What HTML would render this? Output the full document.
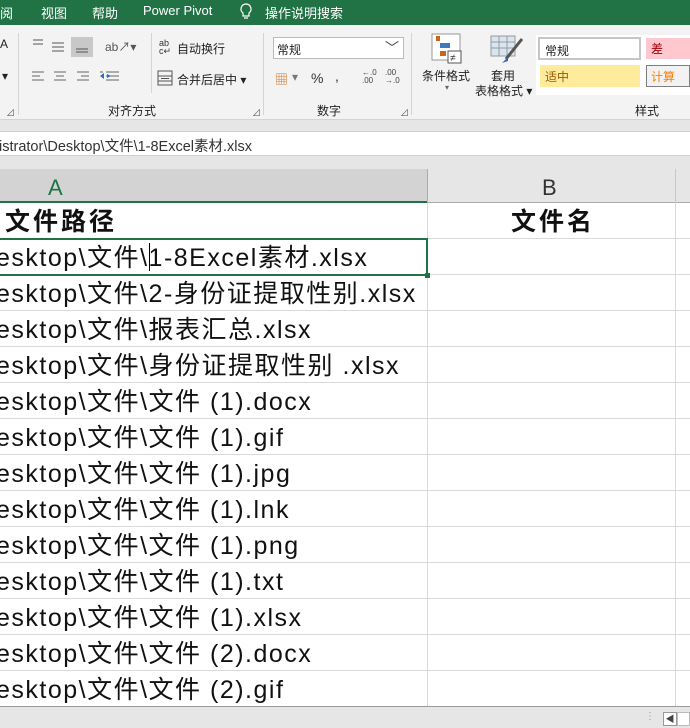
<!DOCTYPE html>
<html><head><meta charset="utf-8"><style>
*{margin:0;padding:0;box-sizing:border-box}
body{width:690px;height:728px;overflow:hidden;background:#e6e6e6;font-family:"Liberation Sans","Noto Sans CJK SC",sans-serif;position:relative}
.a{position:absolute;white-space:nowrap}
.top{left:0;top:0;width:690px;height:25px;background:#217346;color:#fff;font-size:13px}
.rib{left:0;top:25px;width:690px;height:95px;background:#f3f3f3;border-bottom:1px solid #d4d4d4}
.s{font-size:12px;color:#222}
.vl{width:1px;background:#d4d4d4}
.fb{left:0;top:131px;width:690px;height:25px;background:#fff;border-top:1px solid #d0d0d0;border-bottom:1px solid #d0d0d0;font-size:14.5px;color:#333}
.hdr{top:169px;height:34px;font-size:22px;text-align:center;line-height:38px;border-bottom:1px solid #ababab}
.grid{left:0;top:203px;width:690px;height:504px;background:#fff}
.row{position:absolute;left:0;width:690px;height:36px;border-bottom:1px solid #d9d9d9;font-size:25px;letter-spacing:1.5px;color:#111;line-height:38px}
.row span{position:absolute;left:-4px}
.ln{position:absolute;top:0;width:1px;height:504px;background:#d9d9d9}
</style></head><body>
<div class="a top">
<span class="a" style="left:0;top:3px">阅</span>
<span class="a" style="left:41px;top:3px">视图</span>
<span class="a" style="left:92px;top:3px">帮助</span>
<span class="a" style="left:143px;top:3px">Power Pivot</span>
<svg class="a" style="left:239px;top:3px" width="14" height="18" viewBox="0 0 14 18"><path d="M7 1a5 5 0 0 0-3 9v3h6v-3a5 5 0 0 0-3-9zM5 15h4" fill="none" stroke="#fff" stroke-width="1.2"/></svg>
<span class="a" style="left:265px;top:3px">操作说明搜索</span>
</div>
<div class="a rib">
<span class="a s" style="left:0;top:12px">A</span>
<span class="a s" style="left:2px;top:44px">▾</span>
<span class="a" style="left:6px;top:81px;font-size:9px;color:#666">⊿</span>
<div class="a vl" style="left:18px;top:8px;height:82px"></div>
<svg class="a" style="left:30px;top:10px" width="70" height="22"><g stroke="#555" stroke-width="1"><path d="M3 5h10M3 9h10M22 8h12M22 12h12M22 16h12"/></g><rect x="41" y="2" width="22" height="20" fill="#c8c8c8"/><path d="M46 14h12M46 17h12" stroke="#555"/></svg>
<span class="a s" style="left:105px;top:13px;color:#555">ab↗▾</span>
<svg class="a" style="left:30px;top:44px" width="95" height="16"><g stroke="#666" stroke-width="1"><path d="M2 3h12M2 7h8M2 11h12M24 3h12M26 7h8M24 11h12M47 3h12M51 7h8M47 11h12M70 3h3M76 3h10M76 7h10M76 11h10"/></g><path d="M70 7l4-3v6z" fill="#2a6ebb"/></svg>
<svg class="a" style="left:105px;top:44px" width="20" height="16"><g stroke="#666"><path d="M2 3h12M8 7h6M2 11h12"/></g><path d="M2 5l4 2-4 2z" fill="#2a6ebb"/></svg>
<div class="a vl" style="left:151px;top:8px;height:60px"></div>
<span class="a" style="left:159px;top:14px;font-size:9px;color:#333;line-height:8px">ab<br>c↵</span>
<span class="a s" style="left:177px;top:15px">自动换行</span>
<svg class="a" style="left:157px;top:45px" width="16" height="16"><rect x="1" y="1" width="14" height="14" fill="none" stroke="#555"/><path d="M1 6h14M1 11h14M4 8.5h8" stroke="#555"/></svg>
<span class="a s" style="left:177px;top:46px">合并后居中 ▾</span>
<span class="a s" style="left:108px;top:77px">对齐方式</span>
<span class="a" style="left:252px;top:81px;font-size:9px;color:#666">⊿</span>
<div class="a vl" style="left:263px;top:8px;height:82px"></div>
<div class="a" style="left:273px;top:12px;width:131px;height:22px;background:#fff;border:1px solid #bbb"><span class="a s" style="left:3px;top:3px">常规</span><span class="a" style="right:4px;top:0;font-size:14px;color:#444">﹀</span></div>
<span class="a" style="left:275px;top:44px;font-size:13px;color:#d67b2a">▦</span>
<span class="a s" style="left:292px;top:45px;color:#777">▾</span>
<span class="a" style="left:311px;top:45px;font-size:14px;color:#333">%</span>
<span class="a" style="left:335px;top:43px;font-size:14px;color:#333">,</span>
<span class="a" style="left:362px;top:44px;font-size:8px;color:#444;line-height:8px">←.0<br>.00</span>
<span class="a" style="left:385px;top:44px;font-size:8px;color:#444;line-height:8px">.00<br>→.0</span>
<span class="a s" style="left:317px;top:77px">数字</span>
<span class="a" style="left:400px;top:81px;font-size:9px;color:#666">⊿</span>
<div class="a vl" style="left:411px;top:8px;height:82px"></div>
<svg class="a" style="left:431px;top:8px" width="32" height="32"><rect x="1" y="1" width="28" height="26" fill="#fff" stroke="#999"/><rect x="5" y="3" width="4" height="5" fill="#c8641e"/><rect x="9" y="10" width="10" height="5" fill="#3d78c0"/><rect x="9" y="18" width="6" height="5" fill="#c8641e"/><rect x="17" y="18" width="13" height="12" fill="#fff" stroke="#555"/><text x="19" y="28" font-size="10" fill="#333">≠</text></svg>
<span class="a s" style="left:422px;top:42px">条件格式</span>
<span class="a" style="left:445px;top:58px;font-size:8px;color:#666">▾</span>
<svg class="a" style="left:490px;top:10px" width="34" height="30"><rect x="1" y="1" width="24" height="20" fill="#d8e6f3" stroke="#999"/><path d="M1 7h24M1 13h24M9 1v20M17 1v20" stroke="#999"/><path d="M32 4L16 24" stroke="#555" stroke-width="3"/><path d="M18 22l-6 6 6-2z" fill="#2a6ebb"/></svg>
<span class="a s" style="left:491px;top:42px">套用</span>
<span class="a s" style="left:475px;top:57px">表格格式 ▾</span>
<div class="a" style="left:536px;top:10px;width:154px;height:60px;background:#fff"></div>
<div class="a" style="left:538px;top:12px;width:103px;height:23px;background:#fff;border:2px solid #c6c6c6"><span class="a s" style="left:5px;top:3px">常规</span></div>
<div class="a" style="left:646px;top:13px;width:44px;height:21px;background:#ffc7ce"><span class="a s" style="left:5px;top:2px;color:#9c0006">差</span></div>
<div class="a" style="left:540px;top:40px;width:100px;height:22px;background:#ffeb9c"><span class="a s" style="left:5px;top:3px;color:#9c5700">适中</span></div>
<div class="a" style="left:646px;top:40px;width:44px;height:22px;background:#f2f2f2;border:1px solid #7f7f7f"><span class="a s" style="left:4px;top:2px;color:#fa7d00">计算</span></div>
<span class="a s" style="left:635px;top:77px">样式</span>
</div>
<div class="a fb"><span class="a" style="left:-1px;top:3px">istrator\Desktop\文件\1-8Excel素材.xlsx</span></div>
<div class="a hdr" style="left:0;width:427px;background:#d3d3d3;color:#217346;border-bottom:2px solid #217346"><span style="position:absolute;left:48px">A</span></div>
<div class="a hdr" style="left:427px;width:263px;background:#e6e6e6;color:#333;border-left:1px solid #ababab"><span style="position:absolute;left:114px">B</span></div>
<div class="a" style="left:675px;top:169px;width:1px;height:34px;background:#c8c8c8"></div>
<div class="a grid">
<div class="ln" style="left:427px"></div>
<div class="ln" style="left:675px"></div>
<div class="row" style="top:0"><span style="left:5px;font-weight:bold;letter-spacing:3px">文件路径</span><span style="left:511px;font-weight:bold;letter-spacing:3px">文件名</span></div>
<div class="row" style="top:36px"><span>esktop\文件\1-8Excel素材.xlsx</span></div>
<div class="row" style="top:72px"><span>esktop\文件\2-身份证提取性别.xlsx</span></div>
<div class="row" style="top:108px"><span>esktop\文件\报表汇总.xlsx</span></div>
<div class="row" style="top:144px"><span>esktop\文件\身份证提取性别 .xlsx</span></div>
<div class="row" style="top:180px"><span>esktop\文件\文件 (1).docx</span></div>
<div class="row" style="top:216px"><span>esktop\文件\文件 (1).gif</span></div>
<div class="row" style="top:252px"><span>esktop\文件\文件 (1).jpg</span></div>
<div class="row" style="top:288px"><span>esktop\文件\文件 (1).lnk</span></div>
<div class="row" style="top:324px"><span>esktop\文件\文件 (1).png</span></div>
<div class="row" style="top:360px"><span>esktop\文件\文件 (1).txt</span></div>
<div class="row" style="top:396px"><span>esktop\文件\文件 (1).xlsx</span></div>
<div class="row" style="top:432px"><span>esktop\文件\文件 (2).docx</span></div>
<div class="row" style="top:468px"><span>esktop\文件\文件 (2).gif</span></div>
<div style="position:absolute;left:-2px;top:35px;width:430px;height:38px;border:2px solid #217346"></div>
<div style="position:absolute;left:425px;top:70px;width:5px;height:5px;background:#217346"></div>
<div style="position:absolute;left:149px;top:40px;width:1px;height:28px;background:#000"></div>
</div>
<div class="a" style="left:0;top:706px;width:690px;height:1px;background:#9a9a9a"></div>
<span class="a" style="left:645px;top:711px;font-size:10px;color:#999">⋮</span>
<div class="a" style="left:663px;top:712px;width:14px;height:14px;background:#fff;border:1px solid #999;font-size:9px;color:#444;text-align:center;line-height:12px">◀</div>
<div class="a" style="left:677px;top:712px;width:13px;height:14px;background:#fff;border:1px solid #bbb"></div>
</body></html>
